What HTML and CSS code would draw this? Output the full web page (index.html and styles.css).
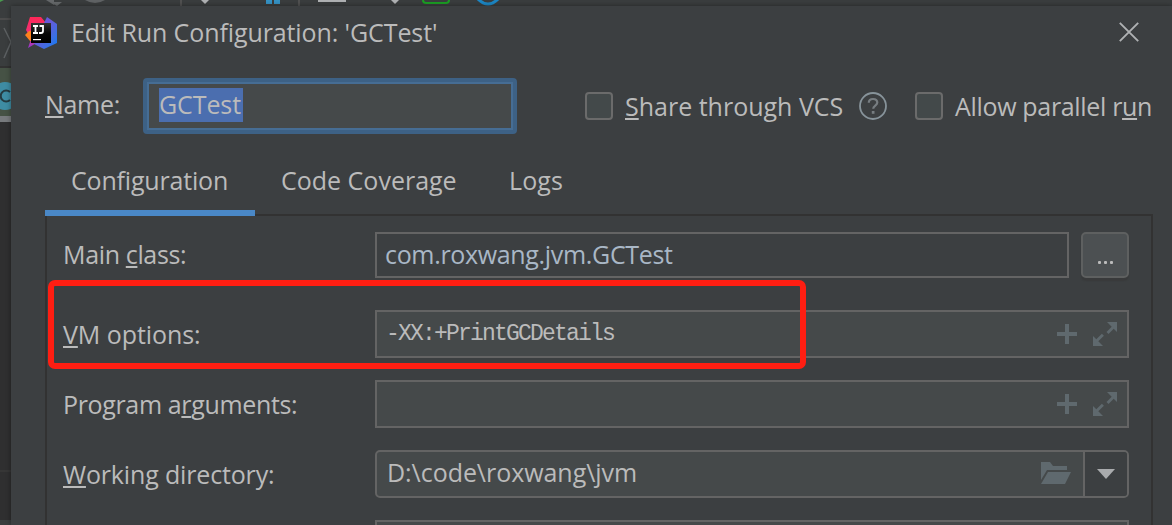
FILE: index.html
```html
<!DOCTYPE html>
<html lang="en">
<head>
<meta charset="utf-8">
<title>Edit Run Configuration</title>
<link rel="stylesheet" href="styles.css">
</head>
<body>
<svg class="backdrop" width="1172" height="525" viewBox="0 0 1172 525" aria-hidden="true">
  <rect width="1172" height="525" fill="#3a3d3e"/>
  <rect y="18" width="11" height="2" fill="#4c4c4c"/>
  <path d="M4 28 L11 42 L4 58" fill="none" stroke="#5c6062" stroke-width="1.5"/>
  <rect y="66" width="11" height="2" fill="#323232"/>
  <rect y="68" width="11" height="48" fill="#465245"/>
  <circle cx="5" cy="96" r="14" fill="#3e8ca3"/>
  <path d="M10 92 A5.5 5.5 0 1 0 10 100" fill="none" stroke="#253a40" stroke-width="2"/>
  <rect y="116" width="11" height="6" fill="#777a7d"/>
  <rect y="122" width="11" height="403" fill="#2f2f30"/>
  <rect y="470" width="11" height="2" fill="#363636"/>
  <rect y="520" width="11" height="5" fill="#3a3d3e"/>
  <path d="M0 0h4L0 2z" fill="#4a9a4f"/>
  <path d="M46 0h8v5zM50 2h12l-5 4z" fill="#66696b"/>
  <path d="M85 0 Q95 6 105 0z" fill="#606365"/>
  <path d="M180 0h2v6h-2zM298 0h2v6h-2z" fill="#515151"/>
  <path d="M201 0h8l-4 4zM391 0h8l-4 4z" fill="#afb1b3"/>
  <path d="M266 0h6v4h-6zM274 0h6v4h-6z" fill="#3592c4"/>
  <path d="M318 0h28v2h-28z" fill="#afb1b3"/>
  <path d="M423 0 q0 3 3 3h20q3 0 3-3" fill="none" stroke="#1b9e24" stroke-width="2"/>
  <path d="M477 -2 Q488 10 499 -2" fill="none" stroke="#1c87c5" stroke-width="3"/>
</svg>

<main class="dialog">
  <header class="titlebar">
    <svg class="logo" width="32" height="33" viewBox="0 0 32 33" aria-hidden="true">
      <defs>
        <linearGradient id="pink" x1="0" y1="0" x2="0" y2="1"><stop offset="0" stop-color="#fe2857"/><stop offset=".55" stop-color="#f0317a"/><stop offset="1" stop-color="#9039d0"/></linearGradient>
        <linearGradient id="blue" x1="0" y1="0" x2="1" y2="1"><stop offset="0" stop-color="#4b62e8"/><stop offset=".4" stop-color="#6b57d8"/><stop offset=".75" stop-color="#3a70e4"/><stop offset="1" stop-color="#087cfa"/></linearGradient>
        <linearGradient id="black" x1="0" y1="0" x2="0" y2="1"><stop offset="0" stop-color="#343434"/><stop offset=".5" stop-color="#080808"/><stop offset="1" stop-color="#000"/></linearGradient>
      </defs>
      <path d="M5 0h11l5 6-8 19-10 6 3-9-5-9z" fill="url(#pink)"/>
      <path d="M0 18l4-4h4v10H5z" fill="#fc801d"/>
      <path d="M22 0l10 7v19L19 32 9 27l9-19z" fill="url(#blue)"/>
      <rect x="6" y="6" width="20" height="20" fill="url(#black)"/>
      <path d="M8 9h5M8 16h5M10.5 9v7M14.5 9H18v5q0 2-2 2h-2" fill="none" stroke="#fff" stroke-width="1.8"/>
      <path d="M8 22h8v1.2H8z" fill="#fff"/>
    </svg>
    <h1 class="title">Edit Run Configuration: 'GCTest'</h1>
    <svg class="close" width="20" height="20" viewBox="0 0 20 20" aria-label="Close"><path d="M.8.8 19.2 19.2M19.2.8.8 19.2" stroke="#afb1b3" stroke-width="1.9"/></svg>
  </header>

  <section class="name-row">
    <label class="name-label"><u>N</u>ame:</label>
    <div class="name-field"><span class="selection">GCTest</span></div>
    <span class="checkbox"></span>
    <span class="check-label share"><u>S</u>hare through VCS</span>
    <svg class="help" width="28" height="28" viewBox="0 0 28 28" aria-label="Help"><circle cx="14" cy="14" r="13" fill="none" stroke="#87939a" stroke-width="1.8"/><path d="M9.8 10.8C9.8 8.2 11.5 7 14 7s4.3 1.4 4.3 3.6c0 3-4.1 3-4.1 6.2" fill="none" stroke="#777d81" stroke-width="2.2"/><rect x="12.8" y="19" width="2.7" height="2.8" fill="#777d81"/></svg>
    <span class="checkbox"></span>
    <span class="check-label parallel">Allow parallel r<u>u</u>n</span>
  </section>

  <nav class="tabs">
    <span class="tab active">Configuration</span>
    <span class="tab coverage">Code Coverage</span>
    <span class="tab logs">Logs</span>
  </nav>

  <section class="panel">
    <div class="row main-row">
      <label class="label main">Main <u>c</u>lass:</label>
      <div class="field plain"><span class="class-name">com.roxwang.jvm.GCTest</span></div>
      <button class="browse" aria-label="Browse"><i></i><i></i><i></i></button>
    </div>
    <div class="row">
      <label class="label vm"><u>V</u>M options:</label>
      <div class="field">
        <span class="mono">-XX:+PrintGCDetails</span>
        <svg class="tools" width="60" height="24" viewBox="0 0 60 24"><path d="M8 2h4v8h8v4h-8v8H8v-8H0v-4h8z"/><path d="M50 0h10v10l-3.3-3.3-5.2 5.2-2-2 5.2-5.2zM36 14l3.3 3.3 5.6-5.6 2 2-5.6 5.6L46 24H36z"/></svg>
      </div>
    </div>
    <div class="row">
      <label class="label args">Program a<u>r</u>guments:</label>
      <div class="field">
        <svg class="tools" width="60" height="24" viewBox="0 0 60 24"><path d="M8 2h4v8h8v4h-8v8H8v-8H0v-4h8z"/><path d="M50 0h10v10l-3.3-3.3-5.2 5.2-2-2 5.2-5.2zM36 14l3.3 3.3 5.6-5.6 2 2-5.6 5.6L46 24H36z"/></svg>
      </div>
    </div>
    <div class="row">
      <label class="label dir"><u>W</u>orking directory:</label>
      <div class="field combo">
        <span class="path">D:\code\roxwang\jvm</span>
        <svg class="folder" width="30" height="22" viewBox="0 0 30 22"><path d="M0 0h9l3 4h14v4H6L0 18z"/><path d="M7 10h23l-6 12H0z"/></svg>
        <span class="drop"><svg width="18" height="10" viewBox="0 0 18 10"><path d="M0 0h18L9 10z" fill="#a9abad"/></svg></span>
      </div>
    </div>
    <div class="row last-row">
      <label class="label"></label>
      <div class="field"></div>
    </div>
  </section>
</main>
<div class="highlight"></div>
</body>
</html>
```
FILE: styles.css
```css
* { box-sizing: border-box; }
body {
  margin: 0;
  width: 1172px;
  height: 525px;
  overflow: hidden;
  position: relative;
  background: #3c3f41;
  color: #bbbbbb;
  font: 25px/34px "Open Sans", "Noto Sans", sans-serif;
  white-space: nowrap;
  display: flow-root;
}
svg { display: block; flex: none; }
u {
  text-decoration: underline 2px;
  text-underline-offset: 2px;
  text-decoration-skip-ink: none;
}
.backdrop { position: absolute; left: 0; top: 0; }
.dialog {
  position: relative;
  margin: 6px 0 0 11px;
  height: 519px;
  background: #3c3f41;
  box-shadow: 0 0 5px rgba(0, 0, 0, .4);
}

.titlebar {
  height: 53px;
  padding: 0 33px 0 14px;
  display: flex;
  align-items: center;
}
.logo { margin-top: 2px; }
.title {
  margin: 0 0 0 14px;
  padding-bottom: 1px;
  font: inherit;
  letter-spacing: -.1px;
  flex: 1;
}
.close { margin-bottom: 2px; }

.name-row {
  height: 56px;
  margin-top: 19px;
  padding-left: 34px;
  display: flex;
  align-items: center;
}
.name-label { width: 98px; padding-bottom: 4px; letter-spacing: -.3px; }
.name-field {
  width: 374px;
  height: 56px;
  border: 4px solid #3d6185;
  border-radius: 4px;
  box-shadow: inset 0 0 0 2px #466d94;
  background: #45494a;
  padding: 6px 12px;
  margin-right: 68px;
}
.selection {
  display: block;
  width: 84px;
  height: 34px;
  line-height: 33px;
  background: #4b6eaf;
  letter-spacing: -.1px;
}
.checkbox {
  width: 28px;
  height: 28px;
  border: 2px solid #6b6b6b;
  border-radius: 4px;
  background: #43494a;
}
.check-label { margin-left: 12px; }
.share { width: 234px; }
.help { margin-right: 28px; }
.parallel { letter-spacing: -.33px; }

.tabs {
  height: 68px;
  margin: 14px 0 0 34px;
  width: 1108px;
  display: flex;
  box-shadow: inset 0 -2px #323232;
}
.tab { padding: 15px 26px 0; }
.active {
  width: 210px;
  letter-spacing: -.18px;
  box-shadow: inset 0 -6px #4a88c7;
}
.coverage { width: 228px; }
.logs { letter-spacing: .1px; }

.panel {
  width: 1108px;
  height: 309px;
  margin-left: 34px;
  padding: 16px 22px 0 16px;
  border: solid #323232;
  border-width: 0 2px;
  display: flex;
  flex-direction: column;
  gap: 22px;
}
.row { height: 48px; flex: none; display: flex; align-items: center; }
.label { width: 312px; flex: none; }
.main { letter-spacing: -.35px; padding-bottom: 2px; }
.vm { letter-spacing: -.07px; }
.args { letter-spacing: -.35px; }
.dir { letter-spacing: -.16px; }
.main-row { height: 46px; margin-bottom: 10px; }
.last-row { height: 5px; overflow: hidden; }
.field {
  flex: 1;
  height: 100%;
  border: 2px solid #646464;
  background: #45494a;
  display: flex;
  align-items: center;
  padding: 0 10px;
}
.last-row .field { border-bottom: 0; }
.plain { background: none; padding: 0 8px; color: #a9b7c6; }
.class-name { letter-spacing: -.33px; padding-bottom: 2px; }
.browse {
  width: 48px;
  height: 46px;
  margin-left: 12px;
  padding: 14px 0 0;
  border: 2px solid #5e6060;
  border-radius: 5px;
  background: #4c5052;
  box-shadow: 0 3px 1px rgba(54, 54, 54, .5);
  display: flex;
  align-items: center;
  justify-content: center;
  gap: 3px;
}
.browse i { width: 3px; height: 3px; border-radius: 1px; background: #bbbbbb; }
.mono {
  font: 23px/34px "Liberation Mono", monospace;
  letter-spacing: -1.8px;
  margin-left: -1px;
}
.tools { margin-left: auto; fill: #5f696e; }
.combo { border-radius: 5px; padding-right: 0; }
.path { padding-bottom: 4px; letter-spacing: -.05px; }
.folder { margin: 0 12px 2px auto; fill: #5f696e; }
.drop {
  width: 44px;
  height: 100%;
  border-left: 2px solid #646464;
  border-radius: 0 3px 3px 0;
  background: #3c3f41;
  display: flex;
  align-items: center;
  justify-content: center;
}
.highlight {
  position: absolute;
  left: 48px;
  top: 280px;
  width: 758px;
  height: 89px;
  border: 6px solid #ff1e12;
  border-radius: 7px;
}
```
